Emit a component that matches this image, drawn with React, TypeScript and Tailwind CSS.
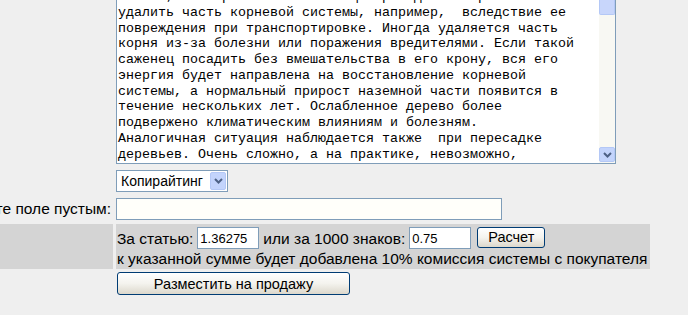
import {ReactElement} from 'react';

const lines: string[] = [
    'Бывает, что при выкопке саженца приходится обрезать и',
    'удалить часть корневой системы, например,  вследствие ее',
    'повреждения при транспортировке. Иногда удаляется часть',
    'корня из-за болезни или поражения вредителями. Если такой',
    'саженец посадить без вмешательства в его крону, вся его',
    'энергия будет направлена на восстановление корневой',
    'системы, а нормальный прирост наземной части появится в',
    'течение нескольких лет. Ослабленное дерево более',
    'подвержено климатическим влияниям и болезням.',
    'Аналогичная ситуация наблюдается также  при пересадке',
    'деревьев. Очень сложно, а на практике, невозможно,',
];

function Chevron(): ReactElement {
    return (
        <svg width="9" height="6" viewBox="0 0 9 6" aria-hidden="true">
            <path d="M1 1 L4.5 4.5 L8 1" fill="none" stroke="#4d6185" strokeWidth="2" />
        </svg>
    );
}

function XpButton({label, className}: {label: string, className: string}): ReactElement {
    return (
        <button
            type="button"
            className={`flex items-center justify-center rounded-[3px] border border-[#003c74] bg-gradient-to-b from-white via-[#f4f3ee] to-[#dcd8cc] text-[14.5px] leading-none text-black ${className}`}
        >
            {label}
        </button>
    );
}

export default function App(): ReactElement {
    return (
        <div className="h-[315px] w-[688px] overflow-hidden bg-[#efefef] font-['Liberation_Sans',Arial,sans-serif] text-[15.5px] text-black">
            {/* text area row */}
            <div className="flex gap-[3px]">
                <div className="w-[113px]" />
                <div className="flex h-[164px] w-[500px] overflow-hidden border-x border-b border-[#7f9db9] bg-white">
                    <div className="flex-1 overflow-hidden pl-[1px]">
                        <div className="-mt-[11px] font-['Liberation_Mono','Courier_New',monospace] text-[13.33px] leading-[15.75px]">
                            {lines.map(
                                line => (
                                    <div key={line} className="whitespace-pre">{line}</div>
                                ),
                            )}
                        </div>
                    </div>
                    <div className="flex w-[16px] flex-col justify-between bg-[#f8f8f3]">
                        <div className="h-[15px] rounded-b-[2px] border border-t-0 border-[#b4c8f6] bg-[#c8d6fb]" />
                        <div className="mb-[1px] flex h-[15px] items-center justify-center rounded-[2px] border border-[#b4c8f6] bg-[#c3d4fc]">
                            <Chevron />
                        </div>
                    </div>
                </div>
            </div>

            {/* category select */}
            <div className="mt-[6px] flex gap-[3px]">
                <div className="w-[113px]" />
                <div className="flex h-[22px] w-[112px] items-center justify-between border border-[#7f9db9] bg-white pl-[4px] pr-[1px] text-[14px]">
                    <span>Копирайтинг</span>
                    <span className="flex h-[18px] w-[16px] items-center justify-center rounded-[2px] border border-[#b4c8f6] bg-[#c3d4fc]">
                        <Chevron />
                    </span>
                </div>
            </div>

            {/* empty field */}
            <div className="mt-[5px] flex items-center gap-[3px]">
                <div className="flex w-[113px] justify-end overflow-hidden pr-[2px]">
                    <span className="whitespace-nowrap">Оставьте поле пустым:</span>
                </div>
                <div className="h-[22px] w-[386px] border border-[#7f9db9] bg-[#fffffa]" />
            </div>

            {/* price band */}
            <div className="mt-[4px] flex h-[45px] w-[650px] gap-[3px]">
                <div className="w-[113px] bg-[#d4d4d4]" />
                <div className="flex-1 bg-[#d4d4d4] pl-[1px] pt-[3px]">
                    <div className="flex h-[22px] items-center">
                        <span>За статью:</span>
                        <div className="ml-[4px] flex h-[22px] w-[62px] items-center border border-[#7f9db9] bg-white pl-[2px] text-[13px]">1.36275</div>
                        <span className="ml-[4px]">или за 1000 знаков:</span>
                        <div className="ml-[4px] flex h-[22px] w-[62px] items-center border border-[#7f9db9] bg-white pl-[2px] text-[13px]">0.75</div>
                        <XpButton label="Расчет" className="-mt-[2px] ml-[6px] h-[21px] w-[68px]" />
                    </div>
                    <div className="mt-[1px] whitespace-nowrap leading-[18px]">
                        к указанной сумме будет добавлена 10% комиссия системы с покупателя
                    </div>
                </div>
            </div>

            {/* submit */}
            <div className="mt-[3px] flex gap-[3px]">
                <div className="w-[113px]" />
                <XpButton label="Разместить на продажу" className="ml-[1px] h-[23px] w-[233px]" />
            </div>
        </div>
    );
}
